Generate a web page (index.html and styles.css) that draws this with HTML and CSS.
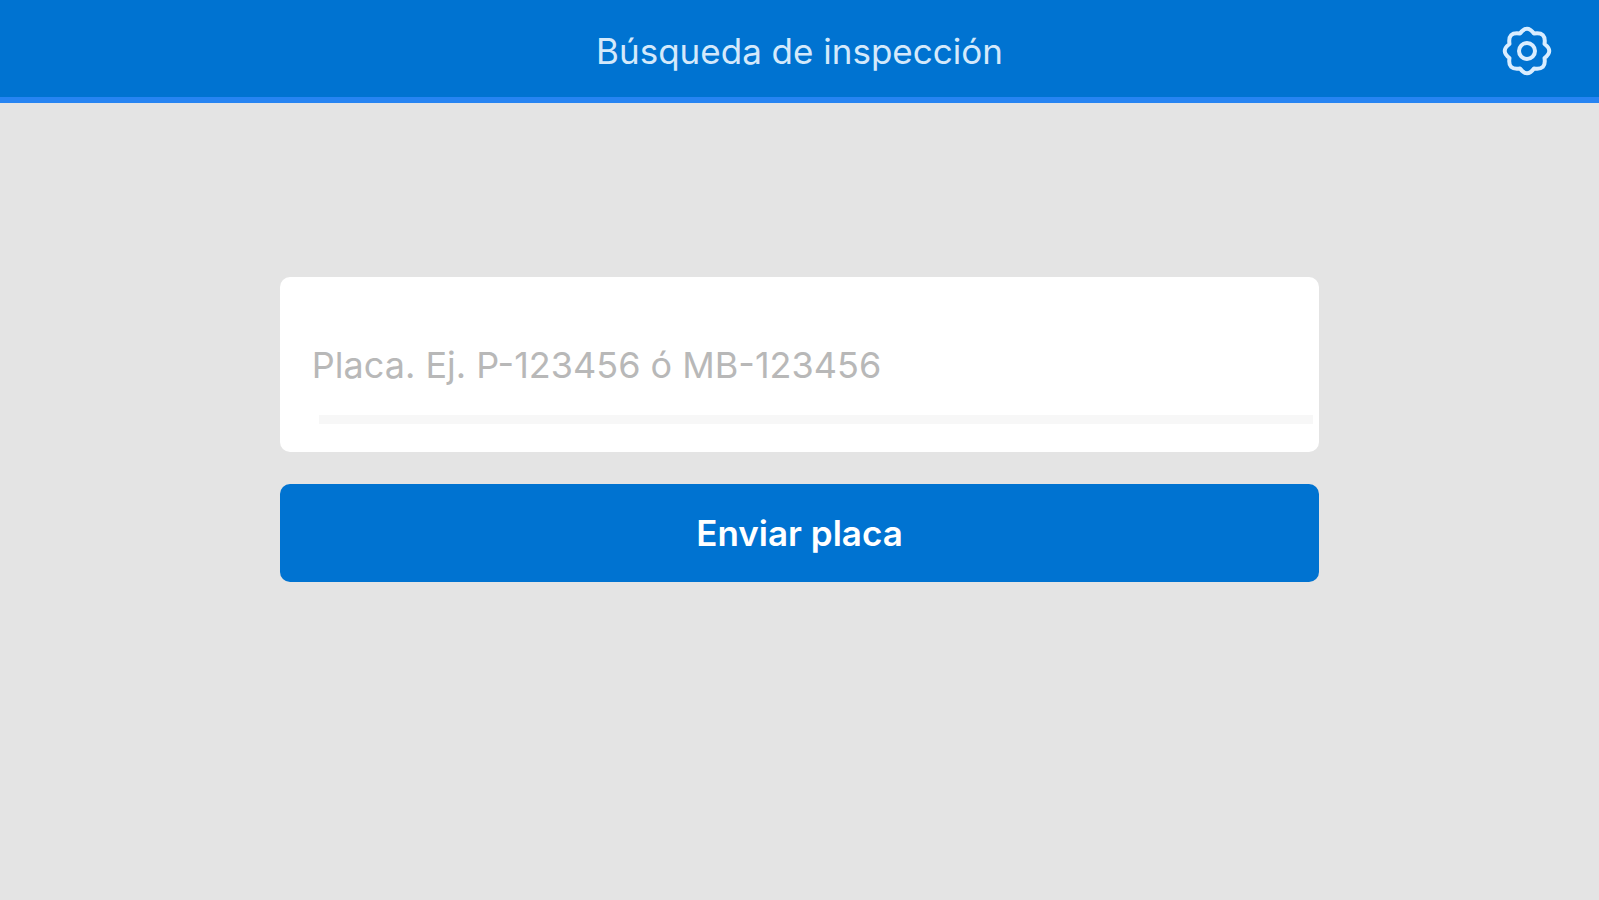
FILE: index.html
```html
<!DOCTYPE html>
<html lang="es">
<head>
<meta charset="utf-8">
<meta name="viewport" content="width=device-width, initial-scale=1">
<title>Búsqueda de inspección</title>
<link rel="stylesheet" href="styles.css">
</head>
<body>
<header class="topbar">
  <h1 class="title">Búsqueda de inspección</h1>
  <button class="settings" type="button" aria-label="Ajustes">
    <svg class="gear" viewBox="-26 -26 52 52" aria-hidden="true">
      <path d="M-7 -17.500Q0 -27 7 -17.500Q19.500 -19.500 17.500 -7Q27 0 17.500 7Q19.500 19.500 7 17.500Q0 27 -7 17.500Q-19.500 19.500 -17.500 7Q-27 0 -17.500 -7Q-19.500 -19.500 -7 -17.500Z"/>
      <circle r="8"/>
    </svg>
  </button>
</header>
<main class="content">
  <form class="search">
    <div class="card">
      <input class="plate" type="text" aria-label="Placa" placeholder="Placa. Ej. P-123456 ó MB-123456">
    </div>
    <button class="submit" type="button">Enviar placa</button>
  </form>
</main>
</body>
</html>
```
FILE: styles.css
```css
* { box-sizing: border-box; }
body {
  margin: 0;
  min-height: 100vh;
  background: #e4e4e4;
  font-family: Inter, "Liberation Sans", sans-serif;
}
.topbar {
  display: grid;
  grid-template-columns: 1fr auto 1fr;
  align-items: center;
  height: 103px;
  padding: 4px 46px 0;
  background: #0073d1;
  border-bottom: 6px solid #2684f2;
}
.title {
  grid-column: 2;
  margin: 0;
  font-size: 35px;
  line-height: 44px;
  font-weight: 400;
  color: #d4e9fb;
}
.settings {
  justify-self: end;
  display: flex;
  padding: 0;
  border: 0;
  background: none;
  cursor: pointer;
}
.gear {
  width: 52px;
  height: 52px;
  fill: none;
  stroke: #d9edff;
  stroke-width: 4;
  stroke-linejoin: round;
}
.content {
  display: flex;
  justify-content: center;
  padding: 174px 0 32px;
}
.search {
  display: flex;
  flex-direction: column;
  gap: 32px;
  width: 65%;
}
.card {
  padding: 44px 6px 28px 32px;
  background: #fff;
  border-radius: 10px;
}
.card::after {
  content: "";
  display: block;
  height: 9px;
  margin-left: 7px;
  background: #f7f7f7;
}
.plate {
  display: block;
  width: 100%;
  height: 94px;
  padding: 0 0 6px;
  border: 0;
  background: none;
  font: inherit;
  font-size: 36px;
  color: #555;
}
.plate::placeholder { color: #b8b8b8; opacity: 1; }
.submit {
  height: 98px;
  border: 0;
  border-radius: 10px;
  background: #0073d1;
  color: #fff;
  font: inherit;
  font-size: 35px;
  font-weight: 600;
  cursor: pointer;
}
```
